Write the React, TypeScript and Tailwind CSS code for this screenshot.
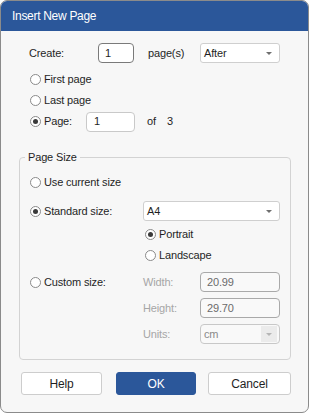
import React from 'react';

function Radio({ checked = false }: { checked?: boolean }) {
  return (
    <span className="w-[11px] h-[11px] rounded-full border border-[#8a8a8a] bg-white flex items-center justify-center shrink-0">
      {checked && <span className="w-[5px] h-[5px] rounded-full bg-[#3a3a3a]" />}
    </span>
  );
}

function Arrow({ color = '#6f6f6f' }: { color?: string }) {
  return (
    <svg width="6" height="3" viewBox="0 0 6 3">
      <path d="M0 0h6L3 3z" fill={color} />
    </svg>
  );
}

function RadioLabel({ checked, label }: { checked?: boolean; label: string }) {
  return (
    <span className="flex items-center gap-[3px]">
      <Radio checked={checked} />
      <span>{label}</span>
    </span>
  );
}

function Select({ value, width }: { value: string; width: string }) {
  return (
    <div className={`${width} h-[20px] border border-[#cfcfcf] rounded-[3px] bg-white flex items-center justify-between pl-[3px] pr-[7px]`}>
      <span>{value}</span>
      <Arrow />
    </div>
  );
}

function Button({ label, primary = false, width }: { label: string; primary?: boolean; width: string }) {
  return (
    <button
      className={`${width} h-[23px] rounded-[3px] border flex items-center justify-center text-[12px] ${
        primary ? 'bg-[#2b579a] border-[#2b579a] text-white' : 'bg-white border-[#cdcdcd] text-[#1f1f1f]'
      }`}
    >
      {label}
    </button>
  );
}

export default function App() {
  return (
    <div className="w-[309px] h-[413px] border border-[#8b8b8b] rounded-[7px] overflow-hidden bg-[#f7f7f7] flex flex-col font-['Liberation_Sans',Arial,sans-serif] text-[11px] tracking-[-0.15px] text-[#1f1f1f]">
      <div className="h-[30px] shrink-0 bg-[#2b579a] text-white text-[12px] tracking-[-0.3px] pl-[11px] flex items-center">
        Insert New Page
      </div>

      {/* create row */}
      <div className="mt-[12px] h-[20px] flex items-center pl-[28px]">
        <span className="w-[69px]">Create:</span>
        <div className="w-[36px] h-[20px] border border-[#7a7a7a] rounded-[4px] bg-white flex items-center pl-[6px]">1</div>
        <span className="ml-[14px] w-[52px]">page(s)</span>
        <Select value="After" width="w-[80px]" />
      </div>

      {/* position */}
      <div className="mt-[6px] pl-[29px] flex flex-col">
        <div className="h-[21px] flex items-center">
          <RadioLabel label="First page" />
        </div>
        <div className="h-[21px] flex items-center">
          <RadioLabel label="Last page" />
        </div>
        <div className="h-[21px] flex items-center">
          <Radio checked />
          <span className="ml-[3px] w-[42px]">Page:</span>
          <div className="w-[49px] h-[20px] border border-[#c9c9c9] rounded-[4px] bg-white flex items-center pl-[7px]">1</div>
          <span className="ml-[12px] w-[20px]">of</span>
          <span>3</span>
        </div>
      </div>

      {/* page size */}
      <fieldset className="mt-[18px] ml-[18px] w-[272px] border border-[#d3d3d3] rounded-[4px] pb-[15px]">
        <legend className="ml-[5px] px-[3px] leading-[14px]">Page Size</legend>
        <div className="mt-[8px] h-[21px] pl-[10px] flex items-center">
          <RadioLabel label="Use current size" />
        </div>
        <div className="mt-[8px] h-[20px] pl-[10px] flex items-center">
          <span className="w-[113px]">
            <RadioLabel checked label="Standard size:" />
          </span>
          <Select value="A4" width="w-[137px]" />
        </div>
        <div className="mt-[3px] h-[21px] pl-[125px] flex items-center">
          <RadioLabel checked label="Portrait" />
        </div>
        <div className="h-[21px] pl-[125px] flex items-center">
          <RadioLabel label="Landscape" />
        </div>
        <div className="mt-[6px] h-[20px] pl-[10px] flex items-center">
          <span className="w-[113px]">
            <RadioLabel label="Custom size:" />
          </span>
          <span className="w-[57px] text-[#a6a6a6]">Width:</span>
          <div className="w-[80px] h-[20px] border border-[#a9a9a9] rounded-[4px] bg-[#f9f9f9] text-[#6b6b6b] flex items-center pl-[6px]">20.99</div>
        </div>
        <div className="mt-[6px] h-[20px] pl-[123px] flex items-center">
          <span className="w-[57px] text-[#a6a6a6]">Height:</span>
          <div className="w-[80px] h-[20px] border border-[#a9a9a9] rounded-[4px] bg-[#f9f9f9] text-[#6b6b6b] flex items-center pl-[6px]">29.70</div>
        </div>
        <div className="mt-[6px] h-[20px] pl-[123px] flex items-center">
          <span className="w-[57px] text-[#a6a6a6]">Units:</span>
          <div className="w-[80px] h-[20px] border border-[#c8c8c8] rounded-[4px] bg-[#f9f9f9] text-[#8a8a8a] flex items-center justify-between pl-[3px] pr-[2px]">
            <span>cm</span>
            <span className="w-[16px] h-[16px] bg-[#ebebeb] flex items-center justify-center">
              <Arrow color="#b5b5b5" />
            </span>
          </div>
        </div>
      </fieldset>

      {/* buttons */}
      <div className="mt-[12px] flex items-center">
        <span className="ml-[20px]">
          <Button label="Help" width="w-[81px]" />
        </span>
        <span className="ml-[14px]">
          <Button label="OK" primary width="w-[80px]" />
        </span>
        <span className="ml-[12px]">
          <Button label="Cancel" width="w-[83px]" />
        </span>
      </div>
    </div>
  );
}
